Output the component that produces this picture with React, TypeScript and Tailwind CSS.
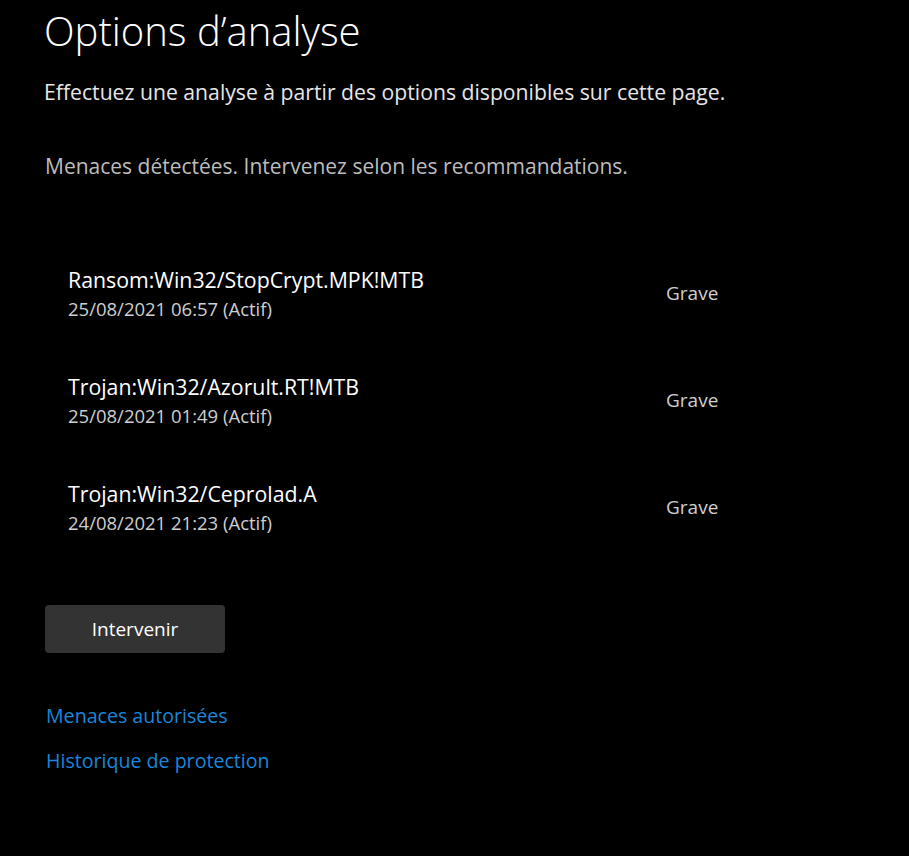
const threats = [
  { name: "Ransom:Win32/StopCrypt.MPK!MTB", date: "25/08/2021 06:57 (Actif)", level: "Grave" },
  { name: "Trojan:Win32/Azorult.RT!MTB", date: "25/08/2021 01:49 (Actif)", level: "Grave" },
  { name: "Trojan:Win32/Ceprolad.A", date: "24/08/2021 21:23 (Actif)", level: "Grave" },
];

export default function App() {
  return (
    <div className="min-h-[856px] w-[909px] bg-black pl-11 text-white font-['Open_Sans',sans-serif]">
      <h1 className="pt-[4px] text-[40px] font-light leading-[54px]">Options d’analyse</h1>
      <p className="mt-[20px] text-[21.2px] leading-[28px] text-[#e6e6e6]">
        Effectuez une analyse à partir des options disponibles sur cette page.
      </p>
      <p className="mt-[46px] pl-px text-[21px] leading-[28px] text-[#bdbdbd]">
        Menaces détectées. Intervenez selon les recommandations.
      </p>

      <ul className="mt-[86px] flex flex-col gap-[52px] pl-6">
        {threats.map((t) => (
          <li key={t.name} className="flex items-center">
            <div className="w-[598px]">
              <div className="text-[21.3px] leading-[28px] text-white">{t.name}</div>
              <div className="mt-[3px] text-[18.5px] leading-[24px] text-[#cfcfcf]">{t.date}</div>
            </div>
            <span className="text-[19px] text-[#cfcfcf]">{t.level}</span>
          </li>
        ))}
      </ul>

      <button className="ml-px mt-[70px] h-[48px] w-[180px] rounded-[4px] bg-[#333333] text-[19px] text-white">
        Intervenir
      </button>

      <div className="mt-[50px] flex flex-col items-start gap-[19px] pl-0.5 text-[19.6px] leading-[26px] text-[#1a86d9]">
        <a href="#">Menaces autorisées</a>
        <a href="#">Historique de protection</a>
      </div>
    </div>
  );
}
